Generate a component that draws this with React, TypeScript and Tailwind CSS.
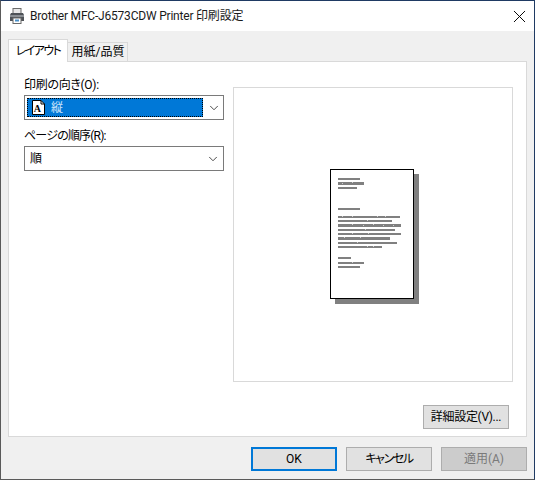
import { ChevronDown, X } from "lucide-react";

const font = { fontFamily: 'Roboto, "Noto Sans CJK JP", sans-serif' };

// [x, y, width, height] of the greeked text lines on the preview page
const lines = [
  [8, 9, 22, 2],
  [8, 13, 26, 3],
  [8, 18, 19, 2],
  [8, 39, 22, 2],
  [8, 47, 62, 2],
  [8, 51, 54, 2],
  [8, 55, 63, 3],
  [8, 60, 57, 2],
  [8, 64, 63, 2],
  [8, 68, 52, 3],
  [8, 73, 59, 2],
  [8, 77, 44, 2],
  [8, 88, 13, 2],
  [8, 93, 26, 2],
  [8, 97, 22, 2],
];

const specks = [
  [12, 14], [22, 13], [12, 47], [22, 47], [47, 47], [55, 47], [37, 51],
  [22, 55], [33, 56], [43, 55], [53, 56], [63, 56], [35, 60], [22, 64],
  [38, 64], [14, 68], [30, 68], [27, 73], [37, 77], [43, 77], [22, 93],
];

function PrinterIcon() {
  return (
    <svg width="16" height="16" viewBox="0 0 16 16" className="-mt-[1px]">
      <rect x="4" y="0.5" width="8" height="5" fill="#e8e8e8" stroke="#6a6a6a" />
      <path d="M2 5h12l1 2v6H1V7z" fill="#4e5257" />
      <rect x="1" y="7" width="14" height="2" fill="#8b8f94" />
      <rect x="4" y="10" width="8" height="5.5" fill="#fff" stroke="#6a6a6a" />
      <rect x="6" y="11.5" width="4" height="2" fill="#4a90c8" />
    </svg>
  );
}

function PortraitIcon() {
  return (
    <svg width="13" height="15" viewBox="0 0 13 15" className="shrink-0">
      <path d="M0.5 0.5H9L12.5 4V14.5H0.5z" fill="#fff" stroke="#000" />
      <path d="M9 0.5V4H12.5" fill="none" stroke="#000" />
      <text x="1.8" y="12" fontSize="10" fontWeight="700" fontFamily="Liberation Serif, serif" fill="#000">
        A
      </text>
    </svg>
  );
}

function PagePreview() {
  return (
    <svg width="89" height="135" viewBox="0 0 89 135">
      <rect x="5" y="5" width="84" height="130" fill="#808080" />
      <rect x="0.5" y="0.5" width="83" height="129" fill="#fff" stroke="#000" />
      {lines.map(([x, y, w, h], i) => (
        <rect key={i} x={x} y={y} width={w} height={h} fill="#808080" />
      ))}
      {specks.map(([x, y], i) => (
        <rect key={i} x={x} y={y} width={1} height={1} fill="#d0d0d0" />
      ))}
    </svg>
  );
}

function Button({ label, primary, disabled, className }: { label: string; primary?: boolean; disabled?: boolean; className?: string }) {
  return (
    <button
      className={`w-[86px] h-[24px] flex items-center justify-center text-[12px] leading-none whitespace-nowrap ${
        primary
          ? "border-2 border-[#0078d7] bg-[#e1e1e1] text-black"
          : disabled
            ? "border border-[#adadad] bg-[#cccccc] text-[#7a7a7a]"
            : "border border-[#adadad] bg-[#e1e1e1] text-black"
      } ${className ?? ""}`}
    >
      {label}
    </button>
  );
}

export default function App() {
  return (
    <div style={font} className="w-[535px] h-[480px] flex flex-col bg-[#f0f0f0] border-l border-b border-[#5a5a5a] border-r-[1px] border-r-[#1f3a63] border-t border-t-[#1f3a63] text-[12px] text-black overflow-hidden">
      <div className="h-[30px] shrink-0 bg-white flex items-center pl-[8px] pr-[4px]">
        <PrinterIcon />
        <span className="ml-[5px] text-[12px] text-[#1a1a1a] whitespace-nowrap tracking-[-0.2px]">Brother MFC-J6573CDW Printer 印刷設定</span>
        <X className="ml-auto" size={21} strokeWidth={1.1} color="#000" />
      </div>

      <div className="flex items-end h-[30px] shrink-0 pl-[7px] relative z-10">
        <div className="w-[60px] h-[23px] -mb-px bg-white border border-b-0 border-[#d9d9d9] flex items-center justify-center whitespace-nowrap [font-feature-settings:'palt'] tracking-[-1.6px]">
          レイアウト
        </div>
        <div className="w-[60px] h-[19px] pl-[1px] bg-[#f0f0f0] border border-l-0 border-b-0 border-[#d9d9d9] flex items-center justify-center whitespace-nowrap">
          用紙/品質
        </div>
      </div>

      <div className="mx-[7px] h-[376px] shrink-0 bg-white border border-[#d9d9d9] pl-[15px] pr-[11px] flex flex-col">
        <div className="flex gap-[9px] pt-[25px]">
          <div className="w-[200px] -mt-[11px]">
            <div className="h-[18px] leading-[18px] whitespace-nowrap [font-feature-settings:'palt'] tracking-[-0.3px]">印刷の向き(O):</div>
            <div className="mt-[1px] h-[25px] border border-[#7a7a7a] flex items-center pl-[2px]">
              <div className="w-[176px] h-[19px] bg-[#0078d7] border border-dotted border-black flex items-center pl-[4px]">
                <PortraitIcon />
                <span className="ml-[6px] text-[#cfe6fb]">縦</span>
              </div>
              <ChevronDown className="ml-[4px]" size={14} strokeWidth={1.5} color="#333" />
            </div>
            <div className="mt-[7px] h-[18px] leading-[18px] whitespace-nowrap [font-feature-settings:'palt'] tracking-[-0.8px]">ページの順序(R):</div>
            <div className="mt-[1px] h-[25px] border border-[#7a7a7a] flex items-center pl-[5px] pr-[3px] justify-between">
              <span>順</span>
              <ChevronDown size={14} strokeWidth={1.5} color="#333" />
            </div>
          </div>
          <div className="w-[280px] h-[295px] border border-[#d9d9d9] flex justify-center pt-[81px] pl-[3px]">
            <div>
              <PagePreview />
            </div>
          </div>
        </div>
        <div className="flex justify-end mt-[23px] pr-[6px]">
          <Button label="詳細設定(V)..." className="tracking-[-0.3px]" />
        </div>
      </div>

      <div className="flex gap-[9px] justify-end pr-[7px] mt-[10px]">
        <Button label="OK" primary />
        <Button label="キャンセル" className="[font-feature-settings:'palt'] tracking-[-1.4px]" />
        <Button label="適用(A)" disabled />
      </div>
    </div>
  );
}
